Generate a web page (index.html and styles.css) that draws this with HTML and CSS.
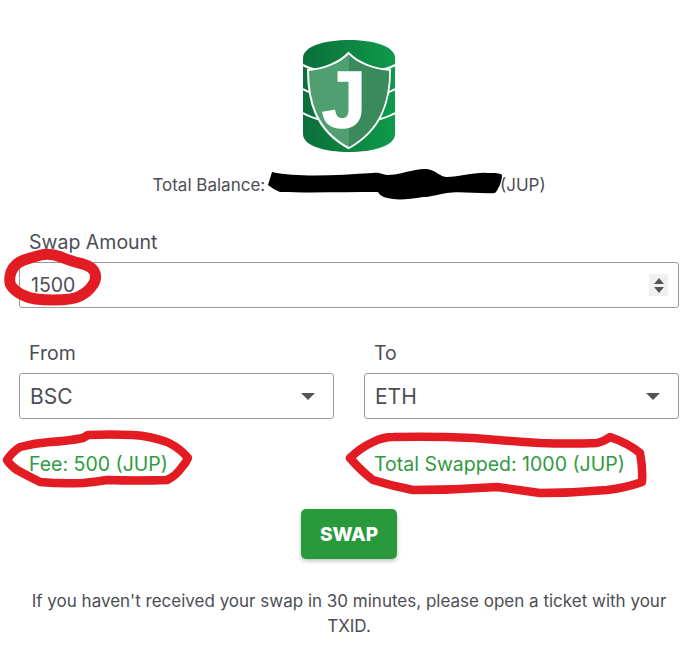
FILE: index.html
```html
<!DOCTYPE html>
<html lang="en">
<head>
    <meta charset="UTF-8">
    <meta name="viewport" content="width=device-width, initial-scale=1.0">
    <title>Swap</title>
    <link rel="stylesheet" href="styles.css">
</head>
<body>
    <div class="container">
        <div class="logo">
            <svg width="92" height="114" viewBox="0 0 92 114">
                <defs>
                    <linearGradient id="cap" x1="0" y1="0" x2="1" y2="0">
                        <stop offset="0" stop-color="#0b6f3a"/>
                        <stop offset="1" stop-color="#0f9a4c"/>
                    </linearGradient>
                </defs>
                <path d="M0 20 C0 8 22 2 46 2 C70 2 92 8 92 20 V96 C92 108 70 114 46 114 C22 114 0 108 0 96 Z" fill="url(#cap)"/>
                <path d="M0 27 C20 38 72 38 92 27 M0 51 C20 63 72 63 92 51 M0 75 C20 87 72 87 92 75" fill="none" stroke="#fff" stroke-width="2"/>
                <path d="M45.5 15 C36 25 20 31 5 32 C5 62 12 92 45.5 110 C79 92 87 62 87 32 C71 31 55 25 45.5 15 Z" fill="#4f9f70" stroke="#fff" stroke-width="2"/>
                <path d="M46 17 C55 26 71 32 86 33 C86 62 78 91 46 109 Z" fill="#3b8a5c"/>
                <text x="41" y="89" text-anchor="middle" class="logo-letter">J</text>
            </svg>
        </div>

        <p class="balance">Total Balance: <span class="balance-value"></span>(JUP)</p>

        <div class="field">
            <label for="swap-amount">Swap Amount</label>
            <div class="amount-box">
                <input type="text" id="swap-amount" value="1500">
                <span class="spinner"><i class="up"></i><i class="down"></i></span>
            </div>
        </div>

        <div class="columns networks">
            <div class="field">
                <label for="from-net">From</label>
                <div class="select-box">
                    <select id="from-net"><option>BSC</option><option>ETH</option></select>
                </div>
            </div>
            <div class="field">
                <label for="to-net">To</label>
                <div class="select-box">
                    <select id="to-net"><option>ETH</option><option>BSC</option></select>
                </div>
            </div>
        </div>

        <div class="columns results">
            <div>Fee: 500 (JUP)</div>
            <div>Total Swapped: 1000 (JUP)</div>
        </div>

        <div class="actions">
            <button type="button" class="swap-btn">SWAP</button>
        </div>

        <p class="note">If you haven't received your swap in 30 minutes, please open a ticket with your TXID.</p>
    </div>

    <!-- marker scribbles drawn on top of the screenshot -->
    <svg class="scribbles" width="700" height="668" viewBox="0 0 700 668">
        <path class="blot" d="M272 172 C300 178 340 175 373 173 C380 172 383 175 387 175 C400 175 415 168 427 169 C436 170 440 177 447 177 C460 177 475 172 487 173 C495 173 500 173 502 175 C502 182 498 190 495 193 C480 194 460 191 447 193 C435 195 430 197 423 197 C412 199 400 200 393 199 C385 198 380 196 378 192 C345 192 310 193 280 192 C275 190 272 188 268 185 Z"/>
        <path class="ring ring-thick" d="M41 255 Q50 253 61 257 Q73 262 83 264 Q93 267 95 273 Q97 280 92 286 Q88 292 80 296 Q73 300 53 300 Q33 300 25 296 Q17 293 12 287 Q8 282 11 272 Q15 263 24 260 Q33 257 41 255 Z"/>
        <path class="ring" d="M88 435 Q110 434 133 435 Q150 436 167 442 Q180 448 188 458 Q186 463 182 467 Q176 476 167 480 Q137 481 107 480 Q95 482 83 483 Q60 484 40 482 Q28 476 17 470 Q10 465 7 460 Q12 452 20 447 Q35 443 50 442 Q68 441 83 438 Z"/>
        <path class="ring" d="M350 458 Q360 448 373 442 Q383 437 393 437 Q433 436 473 438 Q507 441 540 443 Q570 444 597 443 Q605 441 610 437 Q628 443 640 453 Q643 468 642 482 Q625 488 607 490 Q573 493 540 493 Q518 490 497 487 Q455 490 413 490 Q392 486 373 480 Q360 470 350 458 Z"/>
    </svg>
</body>
</html>
```

FILE: styles.css
```css
body {
    font-family: Inter, "Noto Sans", sans-serif;
    margin: 0;
    padding: 0;
    background-color: #ffffff;
    color: #4d4d55;
}

.container {
    height: 668px;
    box-sizing: border-box;
    padding: 38px 21px 0 19px;
    overflow: hidden;
}

.logo {
    display: flex;
    justify-content: center;
    height: 114px;
}

.logo-letter {
    font-family: "Liberation Sans", sans-serif;
    font-weight: 700;
    font-size: 80px;
    fill: #ffffff;
    stroke: #ffffff;
    stroke-width: 1.5;
}

.balance {
    margin: 23px 0 0;
    font-size: 17px;
    line-height: 20px;
    text-align: center;
}

.balance-value {
    display: inline-block;
    width: 230px;
}

.field label {
    display: block;
    font-size: 19.5px;
    line-height: 24px;
    margin-bottom: 8px;
    padding-left: 10px;
}

.field > .amount-box,
.field > .select-box {
    height: 46px;
    box-sizing: border-box;
    border: 1px solid #9a9a9a;
    border-radius: 3px;
    background: #ffffff;
}

.container > .field {
    margin-top: 35px;
}

.amount-box {
    display: flex;
    align-items: center;
    padding-right: 10px;
}

.amount-box input {
    flex: 1;
    min-width: 0;
    border: 0;
    outline: 0;
    padding: 0 0 0 11px;
    font: inherit;
    font-size: 19.5px;
    color: inherit;
    background: transparent;
}

.spinner {
    width: 19px;
    height: 22px;
    display: flex;
    flex-direction: column;
    align-items: center;
    justify-content: center;
    gap: 3px;
    background: #f0f0f0;
}

.spinner i {
    width: 0;
    height: 0;
    border-left: 5px solid transparent;
    border-right: 5px solid transparent;
}

.spinner .up {
    border-bottom: 6px solid #555555;
}

.spinner .down {
    border-top: 6px solid #555555;
}

.columns {
    display: grid;
    grid-template-columns: 315px 315px;
    column-gap: 30px;
}

.networks {
    margin-top: 33px;
}

.select-box {
    position: relative;
}

.select-box select {
    width: 100%;
    height: 100%;
    border: 0;
    outline: 0;
    padding: 0 0 0 10px;
    font: inherit;
    font-size: 21px;
    color: inherit;
    background: transparent;
    appearance: none;
}

.select-box::after {
    content: "";
    position: absolute;
    right: 18px;
    top: 19px;
    border-left: 7px solid transparent;
    border-right: 7px solid transparent;
    border-top: 7px solid #555555;
}

.results {
    margin-top: 33px;
    font-size: 19.5px;
    line-height: 24px;
    color: #2f9a3f;
}

.results div {
    padding-left: 10px;
}

.actions {
    display: flex;
    justify-content: center;
    margin-top: 33px;
}

.swap-btn {
    width: 96px;
    height: 50px;
    border: 0;
    border-radius: 5px;
    background-color: #289a3c;
    color: #ffffff;
    font: inherit;
    font-size: 19px;
    font-weight: 800;
    box-shadow: 0 2px 4px rgba(0, 0, 0, 0.25);
}

.note {
    margin: 30px 0 0;
    padding: 0 8px;
    font-size: 17px;
    line-height: 25px;
    text-align: center;
}

.scribbles {
    position: absolute;
    left: 0;
    top: 0;
    pointer-events: none;
}

.blot {
    fill: #000000;
}

.ring {
    fill: none;
    stroke: #e31c23;
    stroke-width: 8.5;
    stroke-linejoin: round;
}

.ring-thick {
    stroke-width: 11;
}
```
